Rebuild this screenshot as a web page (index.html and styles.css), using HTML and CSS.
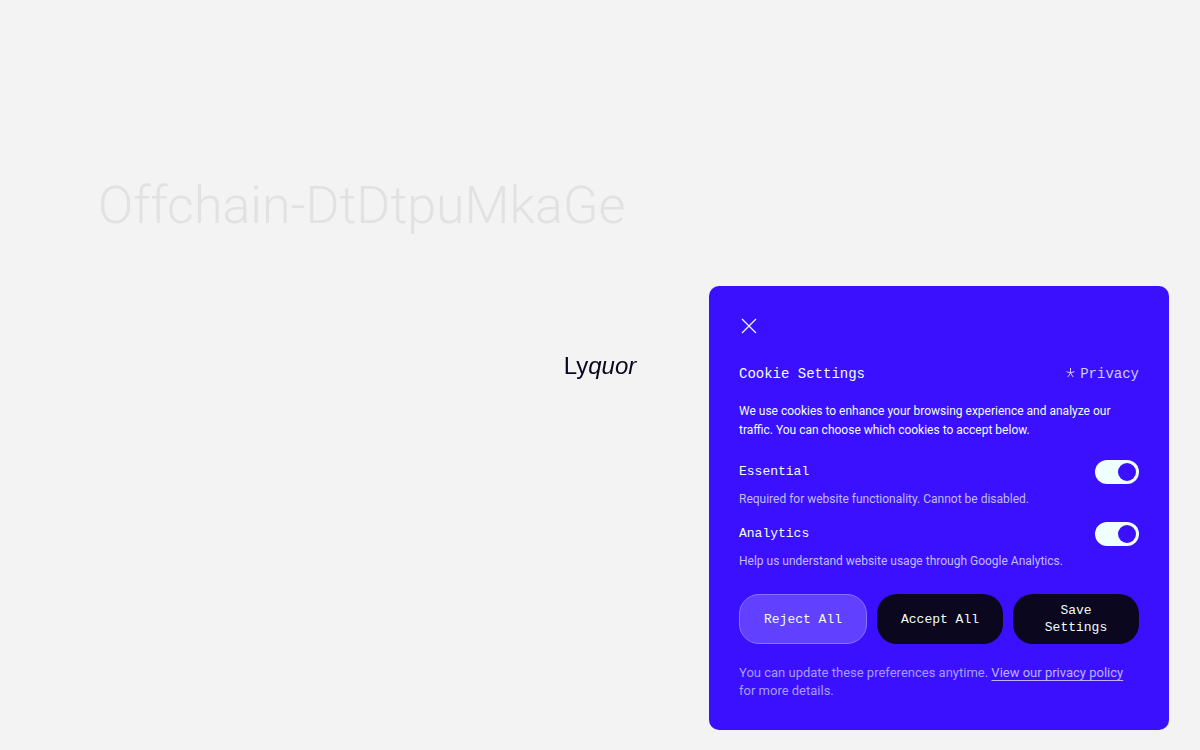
FILE: index.html
```html
<!DOCTYPE html>
<html lang="en">
<head>
<meta charset="utf-8">
<meta name="viewport" content="width=device-width, initial-scale=1">
<title>Lyquor</title>
<link rel="stylesheet" href="styles.css">
</head>
<body>
<main class="page">
  <h1 class="page-title">Offchain-DtDtpuMkaGe</h1>
</main>
<div class="loader"><span class="logo">Ly<em>quor</em></span></div>
<section class="cookies" aria-labelledby="cookies-title">
  <button class="close" type="button" aria-label="Close">
    <svg width="20" height="20" viewBox="0 0 20 20" fill="none" stroke="currentColor" stroke-width="1.2"><path d="M3 3L17 17M17 3L3 17"/></svg>
  </button>
  <header class="cookies-head">
    <h2 class="cookies-title" id="cookies-title">Cookie Settings</h2>
    <a class="privacy" href="#privacy">
      <svg width="9" height="12" viewBox="0 0 9 12" fill="none" stroke="currentColor"><path d="M4.5 0V5M4.5 5L0.5 3.6M4.5 5L8.5 3.6M4.5 5L1.8 9M4.5 5L7.2 9"/></svg>
      Privacy
    </a>
  </header>
  <p class="intro">We use cookies to enhance your browsing experience and analyze our traffic. You can choose which cookies to accept below.</p>
  <div class="options">
    <div class="option">
      <div class="option-row">
        <label class="option-name" for="essential">Essential</label>
        <input class="toggle" id="essential" type="checkbox" checked>
      </div>
      <p class="option-text">Required for website functionality. Cannot be disabled.</p>
    </div>
    <div class="option">
      <div class="option-row">
        <label class="option-name" for="analytics">Analytics</label>
        <input class="toggle" id="analytics" type="checkbox" checked>
      </div>
      <p class="option-text">Help us understand website usage through Google Analytics.</p>
    </div>
  </div>
  <div class="actions">
    <button class="action action-reject" type="button">Reject All</button>
    <button class="action" type="button">Accept All</button>
    <button class="action" type="button">Save Settings</button>
  </div>
  <p class="note">You can update these preferences anytime. <a class="note-link" href="#policy">View our privacy policy</a> for&nbsp;more details.</p>
</section>
</body>
</html>
```
FILE: styles.css
```css
* { box-sizing: border-box; }
body {
  margin: 0;
  min-height: 100vh;
  background: #f3f3f3;
  color: #0b071e;
  font-family: Roboto, "Liberation Sans", sans-serif;
}
h1, h2, p { margin: 0; font-weight: 400; }
.page { padding: 174px 98px 0; }
.page-title {
  font-size: 52px;
  line-height: 64px;
  font-weight: 300;
  color: #e2e2e2;
}
.loader {
  position: fixed;
  inset: 0;
  display: flex;
  align-items: center;
  justify-content: center;
  padding-bottom: 18px;
}
.logo {
  font: 24px/28px "Liberation Sans", sans-serif;
}
.cookies {
  position: fixed;
  right: 31px;
  bottom: 20px;
  width: 460px;
  max-width: calc(100% - 40px);
  padding: 30px;
  border-radius: 10px;
  background: #3a10ff;
  color: #f0ffff;
}
.close {
  display: block;
  padding: 0;
  border: 0;
  background: none;
  color: inherit;
}
.close svg { display: block; }
.cookies-head {
  display: flex;
  justify-content: space-between;
  align-items: center;
  margin: 28px 0 18px;
}
.cookies-title, .privacy {
  font: 14px/20px "Liberation Mono", monospace;
}
.privacy {
  display: flex;
  align-items: center;
  gap: 5px;
  color: #cfcdff;
  text-decoration: none;
}
.intro { font-size: 12px; line-height: 19px; }
.options {
  display: grid;
  gap: 14px;
  margin: 20px 0 24px;
}
.option { display: grid; gap: 6px; }
.option-row {
  display: flex;
  align-items: center;
  justify-content: space-between;
}
.option-name { font: 13px/20px "Liberation Mono", monospace; }
.option-text { font-size: 12px; line-height: 18px; color: #c3bcff; }
.toggle {
  appearance: none;
  display: flex;
  align-items: center;
  width: 44px;
  height: 24px;
  margin: 0;
  padding: 3px;
  border-radius: 12px;
  background: #f0ffff;
}
.toggle::before {
  content: "";
  width: 18px;
  height: 18px;
  border-radius: 50%;
  background: #3a10ff;
}
.toggle:checked::before { margin-left: auto; }
.actions { display: flex; gap: 10px; }
.action {
  flex: 1;
  min-height: 50px;
  padding: 8px 20px;
  border: 0;
  border-radius: 20px;
  background: #0b071e;
  color: #f0ffff;
  font: 13px/17px "Liberation Mono", monospace;
}
.action-reject {
  border: 1px solid #8974ff;
  background: #6240ff;
}
.note {
  margin-top: 20px;
  font-size: 13px;
  line-height: 18px;
  color: #a99dff;
}
.note-link { color: #bdb4ff; text-underline-offset: 3px; }
```
